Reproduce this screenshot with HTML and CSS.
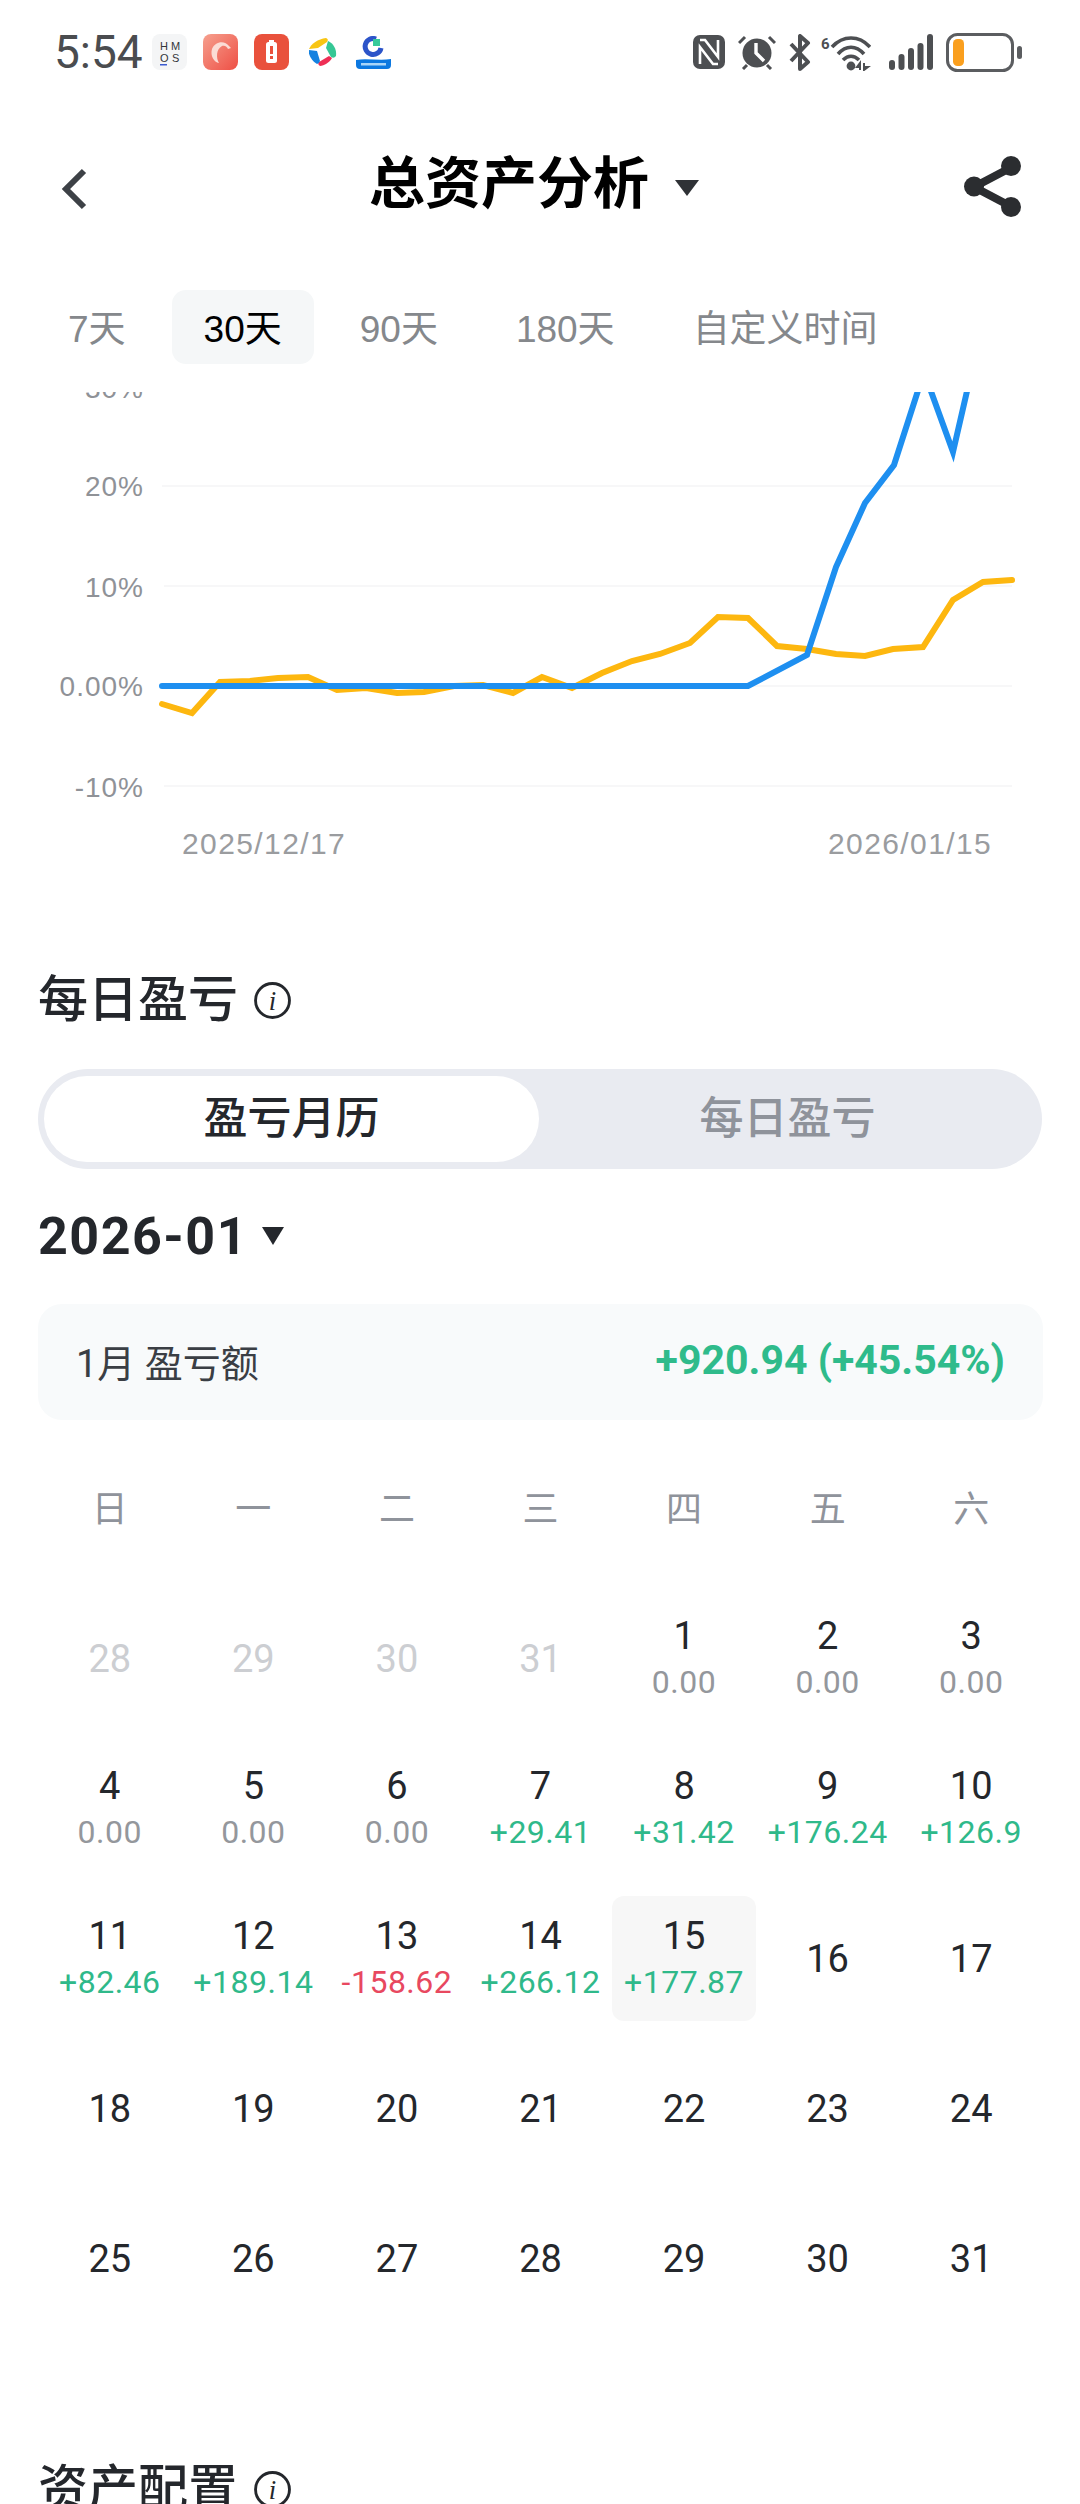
FILE: index.html
```html
<!DOCTYPE html>
<html lang="zh-CN">
<head>
<meta charset="utf-8">
<title>总资产分析</title>
<link rel="stylesheet" href="styles.css">
</head>
<body>
<div class="page">
  <div class="status">
    <div class="status-left">
      <span class="time">5:54</span>
      <svg class="ic-hm" viewBox="0 0 35 36"><rect width="35" height="36" rx="8" fill="#f4f5f6"/><text x="8" y="16" class="hm-t">H</text><text x="19" y="16" class="hm-t">M</text><text x="8" y="28" class="hm-t">O</text><text x="20" y="28" class="hm-t">S</text><rect x="8" y="30" width="7" height="1.5" fill="#3b5bd0"/></svg>
      <svg class="ic-hm" viewBox="0 0 35 36"><defs><linearGradient id="g1" x1="0" y1="0" x2="1" y2="1"><stop offset="0" stop-color="#f6a08e"/><stop offset="1" stop-color="#ee4f45"/></linearGradient></defs><rect width="35" height="36" rx="8" fill="url(#g1)"/><path d="M26 12 C22 6 12 7 9 15 C7 22 11 28 16 29 C13 24 13 15 19 12 C22 11 24 13 25 15 L28 14Z" fill="#fbdcd5"/></svg>
      <svg class="ic-hm" viewBox="0 0 35 36"><rect width="35" height="36" rx="8" fill="#e9513c"/><rect x="15" y="6" width="5" height="3" fill="#fff"/><rect x="12" y="8" width="11" height="21" rx="2.5" fill="#fff"/><rect x="16" y="12" width="3" height="8" fill="#e9513c"/><rect x="16" y="22" width="3" height="3" fill="#e9513c"/></svg>
      <svg class="ic-pin" viewBox="0 0 28 28"><path d="M0 11 C2 6 9 1 17 0 Q20 1 18 4 L9 10 Z" fill="#f8c513"/><path d="M19 3 C24 5 28 11 27 18 Q25 21 22 19 L17 10 Z" fill="#35c795"/><path d="M23 20 C21 24 15 28 11 28 Q8 26 10 24 L20 18 Z" fill="#ee2f55"/><path d="M0 12 L8 13 L11 23 Q10 26 8 26 C3 23 -1 17 0 12Z" fill="#1482e0"/></svg>
      <svg class="ic-blue" viewBox="0 0 35 33"><path d="M20 3 A8 8 0 1 0 25 12" fill="none" stroke="#2c54c9" stroke-width="5"/><rect x="17" y="3" width="7" height="7" fill="#36c99a"/><path d="M0 24 C10 22 24 25 35 23 L35 29 Q35 33 31 33 L4 33 Q0 33 0 29Z" fill="#0c78e0"/><rect x="5" y="27" width="25" height="2.500" fill="#a9d5f8"/></svg>
    </div>
    <div class="status-right">
      <svg class="ic-nfc" viewBox="0 0 32 34"><rect width="32" height="34" rx="7" fill="#4d4f52"/><path d="M7 5H12L25 22V5M7 29V12L20 29H25" fill="none" stroke="#fff" stroke-width="2.600"/></svg>
      <svg class="ic-alarm" viewBox="0 0 38 36"><circle cx="19" cy="19" r="14.500" fill="#4d4f52"/><path d="M1 9 L7 3 M37 9 L31 3 M9 31 L5 35 M29 31 L33 35" stroke="#4d4f52" stroke-width="3"/><path d="M18 9 V19 L26 27" fill="none" stroke="#fff" stroke-width="3.400"/></svg>
      <svg class="ic-bt" viewBox="0 0 24 37"><path d="M3 27 L20 9 L12 2 V35 L20 28 L3 10" fill="none" stroke="#4d4f52" stroke-width="4" stroke-linejoin="round"/></svg>
      <svg class="ic-wifi" viewBox="0 0 50 37"><text x="0" y="15" class="wifi-six">6</text><path d="M11 13 C22 1 38 1 49 13" fill="none" stroke="#4d4f52" stroke-width="3.600"/><path d="M17 20 C25 11 35 11 43 20" fill="none" stroke="#4d4f52" stroke-width="3.600"/><path d="M22 26 C27 21 33 21 38 26" fill="none" stroke="#4d4f52" stroke-width="3.600"/><circle cx="30" cy="32" r="4.400" fill="#4d4f52"/><path d="M39 36 V29 L36 33 H39 M43 29 V36 L47 33 H43" fill="none" stroke="#4d4f52" stroke-width="2"/></svg>
      <svg class="ic-signal" viewBox="0 0 44 36"><rect x="0" y="26" width="6" height="10" rx="3" fill="#4d4f52"/><rect x="9.500" y="20" width="6" height="16" rx="3" fill="#4d4f52"/><rect x="19" y="14" width="6" height="22" rx="3" fill="#4d4f52"/><rect x="28.500" y="9" width="6" height="27" rx="3" fill="#4d4f52"/><rect x="38" y="0" width="6" height="36" rx="3" fill="#4d4f52"/></svg>
      <svg class="ic-batt" viewBox="0 0 76 39"><rect x="1.500" y="1.500" width="65" height="36" rx="10" fill="#fff" stroke="#5b5d60" stroke-width="3"/><rect x="7" y="6" width="11" height="27" rx="4.500" fill="#fa9f1e"/><rect x="71" y="13" width="5" height="13" rx="2.500" fill="#5b5d60"/></svg>
    </div>
  </div>

  <div class="nav">
    <svg class="back" viewBox="0 0 26 42"><path d="M23 3 L5 21 L23 39" fill="none" stroke="#3d4146" stroke-width="6"/></svg>
    <div class="nav-title">
      <span class="title">总资产分析</span>
      <span class="caret-lg"></span>
    </div>
    <svg class="share" viewBox="0 0 57 61"><path d="M48 11 L10 31 L48 51" fill="none" stroke="#2b2d30" stroke-width="8"/><circle cx="47" cy="10" r="10" fill="#2b2d30"/><circle cx="10" cy="30.500" r="10" fill="#2b2d30"/><circle cx="47" cy="51" r="10" fill="#2b2d30"/></svg>
  </div>

  <div class="tabs">
    <span class="tab">7天</span>
    <span class="tab tab-on">30天</span>
    <span class="tab">90天</span>
    <span class="tab">180天</span>
    <span class="tab">自定义时间</span>
  </div>

  <svg class="chart" viewBox="0 376 1080 510">
    <defs><clipPath id="plot"><rect x="0" y="392" width="1080" height="480"/></clipPath></defs>
    <g clip-path="url(#plot)">
      <path class="grid" d="M162 486H1012M164 586H1012M164 686H1012M164 786H1012"/>
      <text x="144" y="398" class="yl">30%</text>
      <text x="144" y="496" class="yl">20%</text>
      <text x="144" y="597" class="yl">10%</text>
      <text x="144" y="696" class="yl">0.00%</text>
      <text x="144" y="797" class="yl">-10%</text>
      <polyline class="l-y" points="162,704 192,713 220,682 250,681 278,678 308,677 337,690 366,688 397,693 424,692 454,686 483,685 513,693 542,677 572,688 602,673 632,661 660,654 690,643 718,617 748,618 777,646 807,649 836,654 865,656 893,649 923,647 953,600 983,582 1012,580"/>
      <polyline class="l-b" points="162,686 748,686 807,655 836,567 865,503 894,465 924,372 953,452 982,326 1012,300"/>
    </g>
    <text x="182" y="854" class="xl">2025/12/17</text>
    <text x="828" y="854" class="xl">2026/01/15</text>
  </svg>

  <div class="sec-head sec-daily">
    <span class="sec-title">每日盈亏</span>
    <svg class="info" viewBox="0 0 36 36"><circle cx="18" cy="18" r="16.500" fill="none" stroke="#24272c" stroke-width="2.800"/><text x="18" y="27" class="info-i">i</text></svg>
  </div>

  <div class="seg">
    <span class="seg-item seg-on">盈亏月历</span>
    <span class="seg-item">每日盈亏</span>
  </div>

  <div class="month">
    <span class="month-text">2026-01</span>
    <span class="caret-sm"></span>
  </div>

  <div class="summary">
    <span class="sum-label">1月 盈亏额</span>
    <span class="sum-value">+920.94 (+45.54%)</span>
  </div>

  <div class="weekdays">
    <span>日</span><span>一</span><span>二</span><span>三</span><span>四</span><span>五</span><span>六</span>
  </div>

  <div class="cal">
    <div class="cell"><span class="d d-off">28</span></div>
    <div class="cell"><span class="d d-off">29</span></div>
    <div class="cell"><span class="d d-off">30</span></div>
    <div class="cell"><span class="d d-off">31</span></div>
    <div class="cell"><span class="d">1</span><span class="v">0.00</span></div>
    <div class="cell"><span class="d">2</span><span class="v">0.00</span></div>
    <div class="cell"><span class="d">3</span><span class="v">0.00</span></div>

    <div class="cell"><span class="d">4</span><span class="v">0.00</span></div>
    <div class="cell"><span class="d">5</span><span class="v">0.00</span></div>
    <div class="cell"><span class="d">6</span><span class="v">0.00</span></div>
    <div class="cell"><span class="d">7</span><span class="v up">+29.41</span></div>
    <div class="cell"><span class="d">8</span><span class="v up">+31.42</span></div>
    <div class="cell"><span class="d">9</span><span class="v up">+176.24</span></div>
    <div class="cell"><span class="d">10</span><span class="v up">+126.9</span></div>

    <div class="cell"><span class="d">11</span><span class="v up">+82.46</span></div>
    <div class="cell"><span class="d">12</span><span class="v up">+189.14</span></div>
    <div class="cell"><span class="d">13</span><span class="v down">-158.62</span></div>
    <div class="cell"><span class="d">14</span><span class="v up">+266.12</span></div>
    <div class="cell cell-today"><span class="d">15</span><span class="v up">+177.87</span></div>
    <div class="cell"><span class="d">16</span></div>
    <div class="cell"><span class="d">17</span></div>

    <div class="cell"><span class="d">18</span></div>
    <div class="cell"><span class="d">19</span></div>
    <div class="cell"><span class="d">20</span></div>
    <div class="cell"><span class="d">21</span></div>
    <div class="cell"><span class="d">22</span></div>
    <div class="cell"><span class="d">23</span></div>
    <div class="cell"><span class="d">24</span></div>

    <div class="cell"><span class="d">25</span></div>
    <div class="cell"><span class="d">26</span></div>
    <div class="cell"><span class="d">27</span></div>
    <div class="cell"><span class="d">28</span></div>
    <div class="cell"><span class="d">29</span></div>
    <div class="cell"><span class="d">30</span></div>
    <div class="cell"><span class="d">31</span></div>
  </div>

  <div class="sec-head sec-alloc">
    <span class="sec-title">资产配置</span>
    <svg class="info" viewBox="0 0 36 36"><circle cx="18" cy="18" r="16.500" fill="none" stroke="#24272c" stroke-width="2.800"/><text x="18" y="27" class="info-i">i</text></svg>
  </div>
</div>
</body>
</html>
```

FILE: styles.css
```css
html, body {
  margin: 0;
  padding: 0;
  background: #fff;
}
.page {
  width: 1080px;
  height: 2504px;
  overflow: hidden;
  display: flex;
  flex-direction: column;
  font-family: "Liberation Sans", "Noto Sans CJK SC", sans-serif;
  color: #24272c;
}

/* status bar */
.status {
  height: 104px;
  box-sizing: border-box;
  padding: 32px 58px 0 54px;
  display: flex;
  justify-content: space-between;
  align-items: flex-start;
  flex: none;
}
.status-left, .status-right {
  display: flex;
  align-items: center;
  height: 40px;
}
.time {
  font-family: Roboto, sans-serif;
  font-size: 46px;
  color: #4a4c4f;
  width: 98px;
  line-height: 40px;
}
.ic-hm { width: 35px; height: 36px; margin-right: 16px; }
.ic-pin { width: 28px; height: 28px; margin: 0 19px 0 4px; }
.ic-blue { width: 35px; height: 33px; }
.hm-t { font: 400 11px "Liberation Sans", sans-serif; fill: #33363a; }
.ic-nfc { width: 32px; height: 34px; margin-right: 13px; }
.ic-alarm { width: 38px; height: 36px; margin-right: 12px; }
.ic-bt { width: 24px; height: 37px; margin-right: 9px; }
.ic-wifi { width: 50px; height: 37px; margin-right: 18px; }
.ic-signal { width: 44px; height: 36px; margin-right: 13px; }
.ic-batt { width: 76px; height: 39px; }
.wifi-six { font: 700 15px Roboto, sans-serif; fill: #4d4f52; }

/* nav */
.nav {
  height: 160px;
  flex: none;
  position: relative;
  display: flex;
  align-items: center;
  justify-content: center;
  box-sizing: border-box;
  padding: 0 12px 0 0;
}
.back { width: 26px; height: 42px; position: absolute; left: 61px; top: 64px; }
.nav-title { display: flex; align-items: center; }
.title {
  font-size: 56px;
  font-weight: 700;
  color: #000;
  line-height: 70px;
}
.caret-lg {
  width: 0;
  height: 0;
  margin: 8px 0 0 26px;
  border-left: 12px solid transparent;
  border-right: 12px solid transparent;
  border-top: 16px solid #2f3236;
}
.share { width: 57px; height: 61px; position: absolute; right: 59px; top: 52px; }

/* tabs */
.tabs {
  flex: none;
  margin-top: 26px;
  padding-left: 36px;
  display: flex;
  gap: 14px;
}
.tab {
  height: 74px;
  line-height: 80px;
  padding: 0 32px;
  font-size: 37px;
  color: #85888c;
  border-radius: 14px;
}
.tab-on { background: #f5f7f8; color: #000; }

/* chart */
.chart { width: 1080px; height: 510px; flex: none; display: block; margin-top: 12px; }
.grid { stroke: #f5f5f6; stroke-width: 1.500; fill: none; }
.yl { font: 28px "Liberation Sans", sans-serif; fill: #8f9297; text-anchor: end; letter-spacing: 1px; }
.xl { font: 30px "Liberation Sans", sans-serif; fill: #9a9c9f; letter-spacing: 1.400px; }
.l-y { fill: none; stroke: #fdb70f; stroke-width: 6; stroke-linejoin: miter; stroke-linecap: round; }
.l-b { fill: none; stroke: #1e8ff0; stroke-width: 6; stroke-linejoin: miter; stroke-linecap: round; }

/* section headings */
.sec-head {
  flex: none;
  display: flex;
  align-items: center;
  padding-left: 38px;
  gap: 16px;
  height: 60px;
}
.sec-daily { margin-top: 84px; }
.sec-title { font-size: 50px; font-weight: 500; line-height: 60px; }
.info { width: 37px; height: 37px; }
.info-i { font: italic 26px "Liberation Serif", serif; fill: #24272c; text-anchor: middle; }

/* segmented control */
.seg {
  flex: none;
  margin: 39px 38px 0;
  height: 100px;
  box-sizing: border-box;
  padding: 7px 6px;
  border-radius: 50px;
  background: #e9ebf1;
  display: flex;
}
.seg-item {
  flex: 1;
  text-align: center;
  line-height: 86px;
  font-size: 44px;
  font-weight: 500;
  color: #8f939b;
}
.seg-on {
  flex: none;
  width: 495px;
  background: #fff;
  border-radius: 43px;
  color: #24272c;
}

/* month */
.month {
  flex: none;
  margin-top: 37px;
  padding-left: 38px;
  height: 60px;
  display: flex;
  align-items: center;
}
.month-text {
  font-family: Roboto, sans-serif;
  font-size: 52px;
  font-weight: 700;
  letter-spacing: 1.500px;
}
.caret-sm {
  margin-left: 14px;
  border-left: 11px solid transparent;
  border-right: 11px solid transparent;
  border-top: 18px solid #24272c;
}

/* summary */
.summary {
  flex: none;
  margin: 38px 37px 0 38px;
  height: 116px;
  box-sizing: border-box;
  padding: 0 38px 4px;
  border-radius: 24px;
  background: #f8fafb;
  display: flex;
  justify-content: space-between;
  align-items: center;
}
.sum-label { font-size: 38px; color: #3a3e44; font-family: Roboto, "Noto Sans CJK SC", sans-serif; }
.sum-value { font-family: Roboto, sans-serif; font-size: 41px; font-weight: 700; color: #2fbb8b; }

/* calendar */
.weekdays {
  flex: none;
  margin: 65px 37px 0 38px;
  display: grid;
  grid-template-columns: repeat(7, 1fr);
  height: 50px;
  line-height: 50px;
  text-align: center;
  font-size: 36px;
  color: #8f939b;
}
.cal {
  flex: none;
  margin: 61px 37px 0 38px;
  display: grid;
  grid-template-columns: repeat(7, 1fr);
  grid-auto-rows: 125px;
  row-gap: 25px;
  font-family: Roboto, sans-serif;
}
.cell {
  display: flex;
  flex-direction: column;
  align-items: center;
  justify-content: center;
  border-radius: 12px;
  white-space: nowrap;
}
.cell-today { background: #f7f7f7; }
.d { font-size: 38px; line-height: 46px; color: #24272c; }
.d-off { color: #ccced2; }
.v { font-size: 32px; letter-spacing: 0.500px; line-height: 46px; color: #94979c; }
.up { color: #2fb98a; }
.down { color: #e8485f; }

.sec-alloc { margin-top: 138px; }
```
